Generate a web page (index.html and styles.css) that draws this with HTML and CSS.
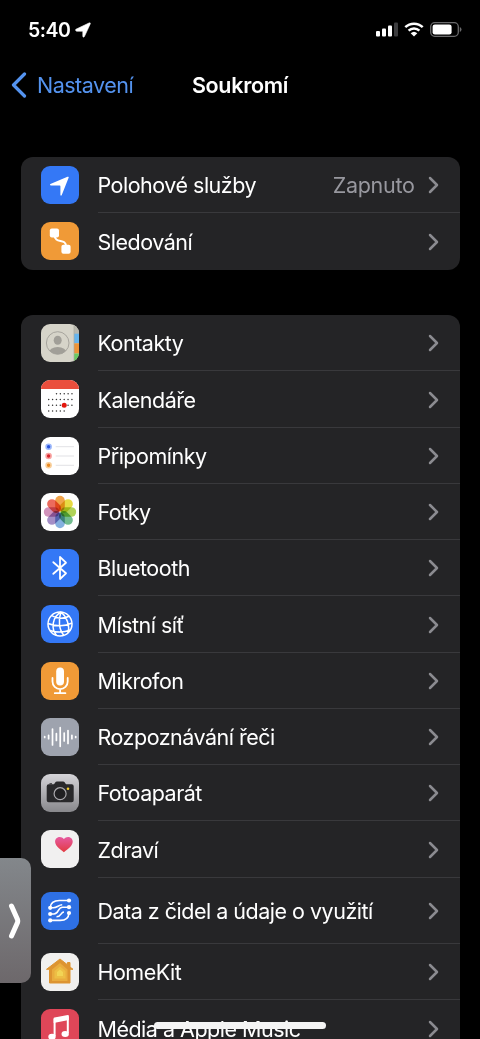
FILE: index.html
```html
<!DOCTYPE html>
<html lang="cs">
<head>
    <meta charset="UTF-8">
    <meta name="viewport" content="width=device-width, initial-scale=1.0">
    <title>Soukromí</title>
    <link rel="stylesheet" href="styles.css">
</head>
<body>
    <div class="status-bar">
        <div class="clock">
            <span class="time">5:40</span>
            <svg class="location" width="16" height="16" viewBox="0 0 16 16"><path d="M1 7.2 14 1Q15.8 .4 15.2 2L9.4 14.6Q8.2 16 7.8 14.2V9.2L1.6 9.2Q-.4 8.4 1 7.2Z" fill="#fff" stroke="#fff" stroke-width=".6"/></svg>
        </div>
        <div class="indicators">
            <svg width="22" height="15" viewBox="0 0 22 15">
                <rect x="0" y="9" width="4" height="5.5" rx="1" fill="#fff"/>
                <rect x="6" y="6.5" width="4" height="8" rx="1" fill="#fff"/>
                <rect x="12" y="3.5" width="4" height="11" rx="1" fill="#fff"/>
                <rect x="18" y="0.5" width="4" height="14" rx="1" fill="#3c3c3e"/>
            </svg>
            <svg width="20" height="15" viewBox="0 0 20 15">
                <path d="M1.3 5.2a12.5 12.5 0 0 1 17.4 0M4.6 8.6a7.8 7.8 0 0 1 10.8 0" fill="none" stroke="#fff" stroke-width="2.5"/>
                <path d="M6.7 11.2a4.8 4.8 0 0 1 6.6 0L10 14.6Z" fill="#fff"/>
            </svg>
            <svg width="32" height="15" viewBox="0 0 32 15">
                <rect x="0.7" y="0.7" width="27.6" height="13.6" rx="4" fill="none" stroke="#6a6a6c" stroke-width="1.3"/>
                <rect x="2.6" y="2.5" width="19" height="10" rx="2.3" fill="#fff"/>
                <path d="M29.8 5v5q1.7-.8 1.7-2.5T29.8 5Z" fill="#6a6a6c"/>
            </svg>
        </div>
    </div>

    <header class="nav">
        <a class="back">
            <svg width="16" height="26" viewBox="0 0 16 26"><path d="M13.5 2 2.5 13l11 11" fill="none" stroke="#5493ef" stroke-width="3.2" stroke-linecap="round" stroke-linejoin="round"/></svg>
            <span>Nastavení</span>
        </a>
        <h1>Soukromí</h1>
    </header>

    <main>
        <ul class="group">
            <li class="row">
                <svg class="icon" viewBox="0 0 38 38">
                    <rect width="38" height="38" fill="#3478f6"/>
                    <path d="M9.4 18.1 26.5 10.8Q28.2 10.2 27.6 11.8L20.8 29Q19.9 30.6 19.4 29V20.3Q19.4 19.6 18.7 19.6H9.7Q8.2 18.8 9.4 18.1Z" fill="#fff"/>
                </svg>
                <div class="cell">
                    <span class="label">Polohové služby</span>
                    <span class="value">Zapnuto</span>
                    <svg class="chevron" viewBox="0 0 12 18"><path d="M2 2l7 7-7 7"/></svg>
                </div>
            </li>
            <li class="row">
                <svg class="icon" viewBox="0 0 38 38">
                    <rect width="38" height="38" fill="#f09a37"/>
                    <path d="M13.5 13c0 9 11.5 3 11.5 11" fill="none" stroke="#fff" stroke-width="2"/>
                    <rect x="8.8" y="6.4" width="9.2" height="9" rx="2" fill="#fff"/>
                    <rect x="20.4" y="22.7" width="9.2" height="9" rx="2" fill="#fff"/>
                </svg>
                <div class="cell">
                    <span class="label">Sledování</span>
                    <svg class="chevron" viewBox="0 0 12 18"><path d="M2 2l7 7-7 7"/></svg>
                </div>
            </li>
        </ul>

        <ul class="group">
            <li class="row">
                <svg class="icon" viewBox="0 0 38 38">
                    <defs><clipPath id="avatar"><circle cx="16.7" cy="19" r="11.2"/></clipPath></defs>
                    <rect width="38" height="38" fill="#d6d4c9"/>
                    <rect x="33" width="5" height="10" fill="#b9b8ae"/>
                    <rect x="33" y="9.7" width="5" height="9.6" fill="#66b5ee"/>
                    <rect x="33" y="19.3" width="5" height="10.2" fill="#ee9438"/>
                    <rect x="33" y="29.5" width="5" height="9" fill="#69cb63"/>
                    <path d="M33 0v38" stroke="#aaa99f" stroke-width=".7"/>
                    <g clip-path="url(#avatar)" fill="#a19f98">
                        <ellipse cx="16.7" cy="16.2" rx="4" ry="4.5"/>
                        <ellipse cx="16.7" cy="29" rx="9" ry="6"/>
                    </g>
                    <circle cx="16.7" cy="19" r="11.3" fill="none" stroke="#a19f98" stroke-width=".9"/>
                </svg>
                <div class="cell">
                    <span class="label">Kontakty</span>
                    <svg class="chevron" viewBox="0 0 12 18"><path d="M2 2l7 7-7 7"/></svg>
                </div>
            </li>
            <li class="row">
                <svg class="icon" viewBox="0 0 38 38">
                    <rect width="38" height="38" fill="#fff"/>
                    <rect width="38" height="9" fill="#ea4e3d"/>
                    <g fill="none" stroke="#333" stroke-width="1.5" stroke-linecap="round" stroke-dasharray="0 3.87">
                        <path d="M15.5 13.7h15.6M7.7 19.6h23.5M7.7 25.3h23.5M7.7 31h15.6"/>
                    </g>
                    <circle cx="23.2" cy="25.3" r="2.5" fill="#e3170d"/>
                </svg>
                <div class="cell">
                    <span class="label">Kalendáře</span>
                    <svg class="chevron" viewBox="0 0 12 18"><path d="M2 2l7 7-7 7"/></svg>
                </div>
            </li>
            <li class="row">
                <svg class="icon" viewBox="0 0 38 38">
                    <rect width="38" height="38" fill="#fff"/>
                    <path d="M14.7 9.7H33M14.7 19H33M14.7 28.3H33" stroke="#d9d9de" stroke-width=".8"/>
                    <g stroke-width="1.6">
                        <circle cx="7.6" cy="9.7" r="2.5" fill="#2a55dd" stroke="#9db8fa"/>
                        <circle cx="7.6" cy="19" r="2.5" fill="#d8262c" stroke="#f8a4a2"/>
                        <circle cx="7.6" cy="28.3" r="2.5" fill="#ea8b25" stroke="#f8cf9c"/>
                    </g>
                </svg>
                <div class="cell">
                    <span class="label">Připomínky</span>
                    <svg class="chevron" viewBox="0 0 12 18"><path d="M2 2l7 7-7 7"/></svg>
                </div>
            </li>
            <li class="row">
                <svg class="icon" viewBox="0 0 38 38">
                    <rect width="38" height="38" fill="#fff"/>
                    <g class="petals">
                        <rect x="14.2" y="2.8" width="9.6" height="15.6" rx="4.8" fill="#f09a37"/>
                        <rect x="14.2" y="2.8" width="9.6" height="15.6" rx="4.8" fill="#e6d72f" transform="rotate(45 19 19)"/>
                        <rect x="14.2" y="2.8" width="9.6" height="15.6" rx="4.8" fill="#a8cf45" transform="rotate(90 19 19)"/>
                        <rect x="14.2" y="2.8" width="9.6" height="15.6" rx="4.8" fill="#62b583" transform="rotate(135 19 19)"/>
                        <rect x="14.2" y="2.8" width="9.6" height="15.6" rx="4.8" fill="#78a8dc" transform="rotate(180 19 19)"/>
                        <rect x="14.2" y="2.8" width="9.6" height="15.6" rx="4.8" fill="#9a82c0" transform="rotate(225 19 19)"/>
                        <rect x="14.2" y="2.8" width="9.6" height="15.6" rx="4.8" fill="#cc86b4" transform="rotate(270 19 19)"/>
                        <rect x="14.2" y="2.8" width="9.6" height="15.6" rx="4.8" fill="#ea5b4b" transform="rotate(315 19 19)"/>
                    </g>
                </svg>
                <div class="cell">
                    <span class="label">Fotky</span>
                    <svg class="chevron" viewBox="0 0 12 18"><path d="M2 2l7 7-7 7"/></svg>
                </div>
            </li>
            <li class="row">
                <svg class="icon" viewBox="0 0 38 38">
                    <rect width="38" height="38" fill="#3478f6"/>
                    <path d="M12.3 13.2 25 24.3 19 30V8l6 5.7-12.700 11.100" fill="none" stroke="#fff" stroke-width="1.8" stroke-linecap="round" stroke-linejoin="round"/>
                </svg>
                <div class="cell">
                    <span class="label">Bluetooth</span>
                    <svg class="chevron" viewBox="0 0 12 18"><path d="M2 2l7 7-7 7"/></svg>
                </div>
            </li>
            <li class="row">
                <svg class="icon" viewBox="0 0 38 38">
                    <rect width="38" height="38" fill="#3478f6"/>
                    <g fill="none" stroke="#fff" stroke-width="1.5">
                        <circle cx="19" cy="19" r="12"/>
                        <path d="M20 7c-9 5-10 17-4.500 23.500M20 7c-3 8-2 18 3 23.500M20 7c6 5 9 14 7 21M10.500 10.500c5 3.500 13 3.500 18 .5M7 18.500c7 3 17 3 24-.5M9 25.500c6 2 14 2 20.500-.5"/>
                    </g>
                </svg>
                <div class="cell">
                    <span class="label">Místní síť</span>
                    <svg class="chevron" viewBox="0 0 12 18"><path d="M2 2l7 7-7 7"/></svg>
                </div>
            </li>
            <li class="row">
                <svg class="icon" viewBox="0 0 38 38">
                    <rect width="38" height="38" fill="#f09a37"/>
                    <rect x="15.2" y="5.6" width="7.8" height="17.8" rx="3.9" fill="#fff"/>
                    <path d="M11.5 16v3.500a7.600 7.600 0 0 0 15.200 0V16M19.100 27.200v4M13.800 31.200h10.600" fill="none" stroke="#fff" stroke-width="1.8" stroke-linecap="round"/>
                </svg>
                <div class="cell">
                    <span class="label">Mikrofon</span>
                    <svg class="chevron" viewBox="0 0 12 18"><path d="M2 2l7 7-7 7"/></svg>
                </div>
            </li>
            <li class="row">
                <svg class="icon" viewBox="0 0 38 38">
                    <rect width="38" height="38" fill="#9ea3ae"/>
                    <path d="M3.7 18.500v1M7.600 17.300v3.400M11.500 11v16M15.400 15.500v7M19.200 9.700v18.600M23.200 15v8M27 12.500v13M30.900 17.300v3.400M34.700 18.600v.8" stroke="#fff" stroke-width="1.7" stroke-linecap="round"/>
                </svg>
                <div class="cell">
                    <span class="label">Rozpoznávání řeči</span>
                    <svg class="chevron" viewBox="0 0 12 18"><path d="M2 2l7 7-7 7"/></svg>
                </div>
            </li>
            <li class="row">
                <svg class="icon" viewBox="0 0 38 38">
                    <defs><linearGradient id="steel" x2="0" y2="1"><stop stop-color="#d5d4d8"/><stop offset="1" stop-color="#88888c"/></linearGradient></defs>
                    <rect width="38" height="38" fill="url(#steel)"/>
                    <path d="M7.700 10.300h5.300l1.600-2.200q.4-.6 1.200-.6h6.400q.8 0 1.200.6l1.600 2.200h5.700q2 0 2 2v14q0 2-2 2h-23q-2 0-2-2v-14q0-2 2-2Z" fill="#29292b"/>
                    <path d="M8.500 9.300h2.500v1H8.500z" fill="#29292b"/>
                    <circle cx="19.1" cy="19.7" r="6" fill="#202022" stroke="#aaa9ad" stroke-width="1.2"/>
                    <circle cx="27" cy="14.7" r="1.3" fill="#f2cb2e"/>
                </svg>
                <div class="cell">
                    <span class="label">Fotoaparát</span>
                    <svg class="chevron" viewBox="0 0 12 18"><path d="M2 2l7 7-7 7"/></svg>
                </div>
            </li>
            <li class="row">
                <svg class="icon" viewBox="0 0 38 38">
                    <defs><linearGradient id="heart" x2="0" y2="1"><stop stop-color="#e65aa0"/><stop offset="1" stop-color="#e23a40"/></linearGradient></defs>
                    <rect width="38" height="38" fill="#f1f0f0"/>
                    <path d="M22.900 22.300C18 18.700 14.100 15.500 14.100 11.600c0-4.800 6.200-6.200 8.800-2.500 2.600-3.700 8.800-2.300 8.800 2.500 0 3.900-3.900 7.100-8.800 10.700Z" fill="url(#heart)"/>
                </svg>
                <div class="cell">
                    <span class="label">Zdraví</span>
                    <svg class="chevron" viewBox="0 0 12 18"><path d="M2 2l7 7-7 7"/></svg>
                </div>
            </li>
            <li class="row tall">
                <svg class="icon" viewBox="0 0 38 38">
                    <rect width="38" height="38" fill="#2e70e4"/>
                    <g fill="none" stroke="#fff" stroke-width="1.6">
                        <path d="M28 8.500H18.500C13 8.500 9.500 10.500 9.200 15.800"/>
                        <path d="M28 15.200h-6.500c-5 0-3.500 6.800-8.500 6.800H9.200"/>
                        <path d="M9.200 15.800h3c4 0 5.500-3 9-3"/>
                        <path d="M15.500 24.800c5 0 4-4.800 7.500-4.800"/>
                        <path d="M9.200 28.400h10c5.300 0 8.500-2 8.800-7.400"/>
                    </g>
                    <g fill="#fff">
                        <circle cx="28" cy="8.500" r="2.1"/><circle cx="28" cy="15.200" r="2.1"/><circle cx="28" cy="21" r="2.1"/>
                        <circle cx="9.200" cy="15.800" r="2.1"/><circle cx="9.200" cy="22" r="2.1"/><circle cx="9.200" cy="28.400" r="2.1"/>
                    </g>
                </svg>
                <div class="cell">
                    <span class="label">Data z čidel a údaje o využití</span>
                    <svg class="chevron" viewBox="0 0 12 18"><path d="M2 2l7 7-7 7"/></svg>
                </div>
            </li>
            <li class="row">
                <svg class="icon" viewBox="0 0 38 38">
                    <rect width="38" height="38" fill="#f1f0ee"/>
                    <path d="M19 6 5.500 16.300H8.500V30H29V16.300h3L29 14V9.500H26.500v2.300Z" fill="#dd9431" stroke="#dd9431" stroke-linejoin="round"/>
                    <path d="M19 10 11 16.500V28h15.500V16.500Z" fill="#e9ac3e"/>
                    <path d="M19 13.500 13.500 18v7.500h11V18Z" fill="#edbe45"/>
                    <path d="M19 16.500 16 19v4h6v-4Z" fill="#f2d455"/>
                </svg>
                <div class="cell">
                    <span class="label">HomeKit</span>
                    <svg class="chevron" viewBox="0 0 12 18"><path d="M2 2l7 7-7 7"/></svg>
                </div>
            </li>
            <li class="row">
                <svg class="icon" viewBox="0 0 38 38">
                    <rect width="38" height="38" fill="#df4658"/>
                    <path d="M13.600 27V10M26.800 24V7.500" fill="none" stroke="#fff" stroke-width="2"/>
                    <path d="M12.600 9.600Q12.600 8.700 13.500 8.500L26.800 5.900Q27.800 5.800 27.800 6.700V11L12.600 14Z" fill="#fff"/>
                    <ellipse cx="11" cy="27.800" rx="3.700" ry="3" fill="#fff"/>
                    <ellipse cx="24.200" cy="25" rx="3.700" ry="3" fill="#fff"/>
                </svg>
                <div class="cell">
                    <span class="label">Média a Apple Music</span>
                    <svg class="chevron" viewBox="0 0 12 18"><path d="M2 2l7 7-7 7"/></svg>
                </div>
            </li>
        </ul>
    </main>

    <div class="pip-handle">
        <svg width="14" height="36" viewBox="0 0 14 36"><path d="M3.500 3 9.500 16.500Q10 18 9.500 19.500L3.500 33" fill="none" stroke="#fff" stroke-width="5" stroke-linecap="round"/></svg>
    </div>
    <div class="home-indicator"></div>
</body>
</html>
```
FILE: styles.css
```css
* {
    box-sizing: border-box;
}
body {
    margin: 0;
    height: 1039px;
    overflow: hidden;
    position: relative;
    background-color: #000;
    color: #fff;
    font-family: Inter, sans-serif;
    font-size: 21.5px;
    letter-spacing: -0.5px;
}
.status-bar {
    display: flex;
    justify-content: space-between;
    align-items: center;
    height: 59px;
    padding: 0 18px 0 28px;
}
.clock, .indicators {
    display: flex;
    align-items: center;
}
.clock {
    gap: 5px;
}
.time {
    font-size: 19.5px;
    font-weight: 600;
}
.indicators {
    gap: 6px;
}
.nav {
    display: grid;
    grid-template-columns: 1fr auto 1fr;
    align-items: center;
    height: 51px;
    padding: 0 11px;
}
.back {
    display: flex;
    align-items: center;
    gap: 10px;
    color: #5493ef;
}
h1 {
    margin: 0;
    font-size: 21.5px;
    font-weight: 600;
    letter-spacing: -0.3px;
}
main {
    display: flex;
    flex-direction: column;
    gap: 45.5px;
    padding: 47px 20.5px 0;
}
.group {
    list-style: none;
    margin: 0;
    padding: 0;
    background-color: #242426;
    border-radius: 12px;
    overflow: hidden;
}
.row {
    display: flex;
    align-items: center;
    height: 56.25px;
    padding-left: 20px;
}
.tall {
    height: 66.5px;
}
.icon {
    width: 38px;
    height: 38px;
    margin-right: 19px;
    border-radius: 9px;
    flex: none;
}
.petals rect {
    mix-blend-mode: multiply;
    opacity: 0.9;
}
.cell {
    display: flex;
    align-items: center;
    flex: 1;
    height: 100%;
    padding-right: 20px;
    padding-top: 1.5px;
    border-bottom: 1px solid #39393c;
}
.row:last-child .cell {
    border-bottom: none;
}
.label {
    flex: 1;
    white-space: nowrap;
}
.value {
    color: #98989f;
    margin-right: 13px;
    letter-spacing: -0.3px;
}
.chevron {
    width: 12px;
    height: 18px;
    fill: none;
    stroke: #8b8b90;
    stroke-width: 2.5;
    stroke-linecap: round;
    stroke-linejoin: round;
}
.pip-handle {
    position: absolute;
    left: 0;
    top: 858px;
    width: 31px;
    height: 125px;
    display: flex;
    align-items: center;
    padding-left: 8px;
    border-radius: 0 10px 10px 0;
    background: linear-gradient(#83878b, #6d686b);
}
.home-indicator {
    position: absolute;
    left: 154px;
    top: 1022px;
    width: 172px;
    height: 7px;
    border-radius: 4px;
    background-color: #f4f4f4;
}
```
